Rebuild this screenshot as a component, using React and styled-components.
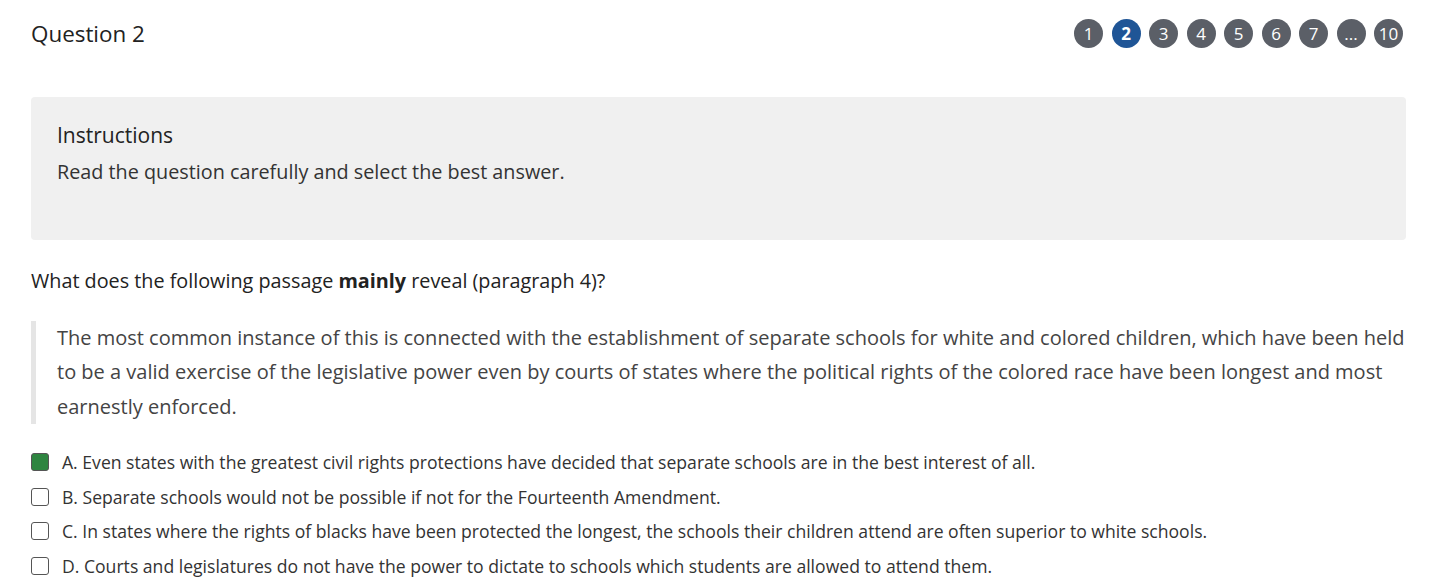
import React from "react";
import styled, { createGlobalStyle } from "styled-components";

const GlobalStyle = createGlobalStyle`
  body {
    margin: 0;
    background: #fff;
    font-family: "Open Sans", "Liberation Sans", sans-serif;
    color: #222;
  }
`;

const Page = styled.div`
  padding: 0 35px 0 31px;
`;

const Header = styled.div`
  display: flex;
  justify-content: space-between;
  align-items: center;
  height: 67px;
`;

const Title = styled.h1`
  margin: 0 0 1px;
  font-size: 22.4px;
  font-weight: 400;
  color: #222;
`;

const Pager = styled.div`
  display: flex;
  gap: 8.5px;
  margin-right: 3px;
`;

const PageDot = styled.span`
  width: 29px;
  height: 29px;
  border-radius: 50%;
  display: flex;
  align-items: center;
  justify-content: center;
  background: ${(p) => (p.active ? "#1f5596" : "#5b5f67")};
  color: #fff;
  font-size: 17px;
  font-weight: ${(p) => (p.active ? 700 : 400)};
`;

const Instructions = styled.div`
  margin-top: 30px;
  background: #f0f0f0;
  border-radius: 4px;
  height: 143px;
  padding: 24px 26px;
  box-sizing: border-box;
`;

const InstrTitle = styled.div`
  font-size: 21px;
  color: #222;
  line-height: 28px;
`;

const InstrText = styled.div`
  margin-top: 11px;
  font-size: 19.8px;
  color: #333;
  line-height: 24px;
`;

const Prompt = styled.p`
  margin: 29px 0 0;
  font-size: 19.8px;
  line-height: 24px;
  color: #222;
`;

const Passage = styled.blockquote`
  margin: 28px 0 0;
  border-left: 5px solid #e5e5e5;
  padding: 0 0 0 21px;
  font-size: 20px;
  line-height: 34.4px;
  color: #444;
`;

const Options = styled.div`
  margin-top: 21px;
  display: flex;
  flex-direction: column;
`;

const Option = styled.label`
  display: flex;
  align-items: center;
  height: 34.4px;
  font-size: 17.6px;
  color: #333;
`;

const Box = styled.span`
  width: 18px;
  height: 18px;
  box-sizing: border-box;
  border-radius: 3px;
  border: 1.5px solid #555;
  background: ${(p) => (p.checked ? "#2e8540" : "#fff")};
  margin-right: 13px;
  flex-shrink: 0;
`;

const pages = ["1", "2", "3", "4", "5", "6", "7", "...", "10"];

const options = [
  "A. Even states with the greatest civil rights protections have decided that separate schools are in the best interest of all.",
  "B. Separate schools would not be possible if not for the Fourteenth Amendment.",
  "C. In states where the rights of blacks have been protected the longest, the schools their children attend are often superior to white schools.",
  "D. Courts and legislatures do not have the power to dictate to schools which students are allowed to attend them.",
];

export default function App() {
  return (
    <Page>
      <GlobalStyle />
      <Header>
        <Title>Question 2</Title>
        <Pager>
          {pages.map((p) => (
            <PageDot key={p} active={p === "2"}>
              {p}
            </PageDot>
          ))}
        </Pager>
      </Header>
      <Instructions>
        <InstrTitle>Instructions</InstrTitle>
        <InstrText>Read the question carefully and select the best answer.</InstrText>
      </Instructions>
      <Prompt>
        What does the following passage <b>mainly</b> reveal (paragraph 4)?
      </Prompt>
      <Passage>
        The most common instance of this is connected with the establishment of separate
        schools for white and colored children, which have been held to be a valid exercise
        of the legislative power even by courts of states where the political rights of the
        colored race have been longest and most earnestly enforced.
      </Passage>
      <Options>
        {options.map((o, i) => (
          <Option key={i}>
            <Box checked={i === 0} />
            {o}
          </Option>
        ))}
      </Options>
    </Page>
  );
}
